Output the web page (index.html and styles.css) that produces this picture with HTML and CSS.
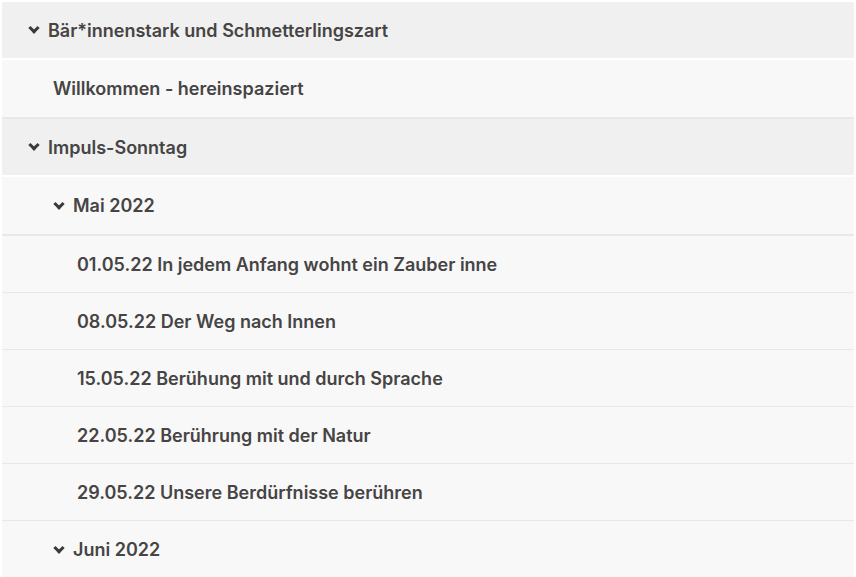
FILE: index.html
```html
<!DOCTYPE html>
<html lang="de">
<head>
  <meta charset="UTF-8">
  <title>Menü</title>
  <link rel="stylesheet" href="styles.css">
</head>
<body>

  <ul class="menu">
    <li class="group">
      <a href="#" class="row top open"><span class="chev"></span>Bär*innenstark und Schmetterlingszart</a>
      <ul class="sub">
        <li><a href="#" class="row lvl2">Willkommen - hereinspaziert</a></li>
      </ul>
    </li>
    <li class="group">
      <a href="#" class="row top open"><span class="chev"></span>Impuls-Sonntag</a>
      <ul class="sub">
        <li>
          <a href="#" class="row lvl2 open"><span class="chev"></span>Mai 2022</a>
          <ul class="sub">
            <li><a href="#" class="row lvl3">01.05.22 In jedem Anfang wohnt ein Zauber inne</a></li>
            <li><a href="#" class="row lvl3">08.05.22 Der Weg nach Innen</a></li>
            <li><a href="#" class="row lvl3">15.05.22 Berühung mit und durch Sprache</a></li>
            <li><a href="#" class="row lvl3">22.05.22 Berührung mit der Natur</a></li>
            <li><a href="#" class="row lvl3">29.05.22 Unsere Berdürfnisse berühren</a></li>
          </ul>
        </li>
        <li><a href="#" class="row lvl2 open"><span class="chev"></span>Juni 2022</a></li>
      </ul>
    </li>
  </ul>

</body>
</html>
```

FILE: styles.css
```css
* {
  margin: 0;
  padding: 0;
  box-sizing: border-box;
}

body {
  background: #fff;
  padding: 2px 2px 0 2px;
  font-family: 'Inter', 'Noto Sans', sans-serif;
}

ul {
  list-style: none;
}

/* Rows */
.row {
  display: flex;
  align-items: center;
  height: 57px;
  color: #464444;
  font-size: 18px;
  font-weight: 600;
  text-decoration: none;
  background: #f8f8f8;
  border-bottom: 1px solid #e8e8e8;
}

.row.top {
  height: 58px;
  background: #f0f0f0;
  padding-left: 28px;
  border-bottom: 2px solid #fff;
}

.row.lvl2 {
  height: 59px;
  padding-left: 53px;
  border-bottom-width: 2px;
}

.row.lvl2:not(.open) {
  padding-left: 51px;
}

.row.lvl3 {
  padding-left: 75px;
}

/* Chevron */
.chev {
  flex: none;
  width: 8px;
  height: 8px;
  border-right: 3px solid #3a3a3a;
  border-bottom: 3px solid #3a3a3a;
  transform: rotate(45deg);
  margin: -4px 10px 0 0;
}
```
